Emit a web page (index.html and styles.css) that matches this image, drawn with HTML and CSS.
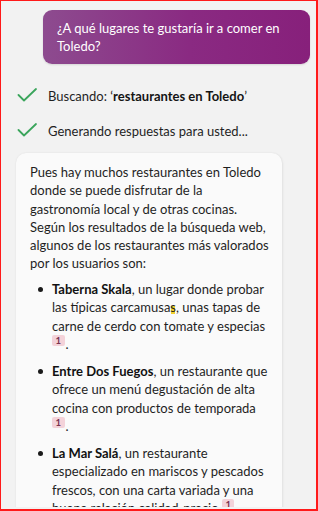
FILE: index.html
```html
<!DOCTYPE html>
<html lang="es">
<head>
<meta charset="utf-8">
<link rel="stylesheet" href="styles.css">
</head>
<body>
<div class="frame">
  <div class="chat">
    <div class="bubble">¿A qué lugares te gustaría ir a comer en Toledo?</div>

    <div class="status status-first">
      <svg class="check" width="20" height="14" viewBox="0 0 20 14"><path d="M1.5 7 L7 12.5 L19 1" fill="none" stroke="#3ba55c" stroke-width="1.8" stroke-linecap="round" stroke-linejoin="round"/></svg>
      <span>Buscando: ‘<b>restaurantes en Toledo</b>’</span>
    </div>
    <div class="status">
      <svg class="check" width="20" height="14" viewBox="0 0 20 14"><path d="M1.5 7 L7 12.5 L19 1" fill="none" stroke="#3ba55c" stroke-width="1.8" stroke-linecap="round" stroke-linejoin="round"/></svg>
      <span>Generando respuestas para usted...</span>
    </div>

    <div class="card">
      <p class="intro">Pues hay muchos restaurantes en Toledo donde se puede disfrutar de la gastronomía local y de otras cocinas. Según los resultados de la búsqueda web, algunos de los restaurantes más valorados por los usuarios son:</p>
      <ul class="list">
        <li class="item"><span class="dot"></span><span class="item-text"><b>Taberna Skala</b>, un lugar donde probar las típicas carcamusa<span class="mark">s</span>, unas tapas de carne de cerdo con tomate y especias <sup class="cite">1</sup>.</span></li>
        <li class="item"><span class="dot"></span><span class="item-text"><b>Entre Dos Fuegos</b>, un restaurante que ofrece un menú degustación de alta cocina con productos de temporada <sup class="cite">1</sup>.</span></li>
        <li class="item"><span class="dot"></span><span class="item-text"><b>La Mar Salá</b>, un restaurante especializado en mariscos y pescados frescos, con una carta variada y una buena relación calidad-precio <sup class="cite">1</sup>.</span></li>
      </ul>
    </div>
  </div>
</div>
</body>
</html>
```
FILE: styles.css
```css
html, body {
  margin: 0;
  padding: 0;
}

body {
  font-family: "Lato", "Noto Sans", sans-serif;
  font-size: 13px;
  color: #1f1f1f;
}

.frame {
  width: 318px;
  height: 511px;
  box-sizing: border-box;
  border: 1px solid #ff1a1a;
  border-right-width: 2px;
  border-bottom-width: 2px;
  background: #f2f2f2;
  padding-bottom: 2px;
  display: flex;
  flex-direction: column;
}

.chat {
  flex: 1;
  overflow: hidden;
  padding: 9px 6px 0 14px;
  display: flex;
  flex-direction: column;
}

.bubble {
  align-self: flex-end;
  width: 267px;
  box-sizing: border-box;
  padding: 9px 14px;
  line-height: 18px;
  color: #fff;
  border-radius: 9px;
  background: linear-gradient(90deg, #8d4b8f 0%, #8a2a82 55%, #87207b 100%);
  box-shadow: 0 1px 2px rgba(0, 0, 0, 0.12);
}

.status {
  display: flex;
  align-items: center;
  gap: 11px;
  margin-top: 17px;
  line-height: 18px;
  margin-left: 2px;
}

.status-first {
  margin-top: 23px;
}

.status b {
  font-weight: 700;
  color: #141414;
}

.check {
  flex: none;
  display: block;
  margin-top: -3px;
}

.card {
  flex: none;
  width: 266px;
  box-sizing: border-box;
  margin-top: 13px;
  margin-left: 1px;
  padding: 10px 13px 20px 14px;
  background: #fafafa;
  border-radius: 10px;
  box-shadow: 0 0 2px rgba(0, 0, 0, 0.08), 1px 1px 3px rgba(0, 0, 0, 0.05);
  line-height: 18.3px;
}

.intro {
  margin: 0;
}

.list {
  list-style: none;
  margin: 7px 0 0 0;
  padding: 0;
}

.item {
  display: grid;
  grid-template-columns: 22px 1fr;
  line-height: 18.5px;
  margin-bottom: 8px;
}

.dot {
  width: 5px;
  height: 5px;
  border-radius: 50%;
  background: #1a1a1a;
  margin: 7px 0 0 8px;
}

.item b {
  font-weight: 700;
  color: #111;
}

.cite {
  display: inline-block;
  vertical-align: 5px;
  font-size: 9.5px;
  font-weight: 700;
  line-height: 11px;
  height: 11px;
  padding: 0 3.5px;
  margin-right: 1px;
  border-radius: 2px;
  background: #f3d2d9;
  color: #7a3350;
}

.mark {
  background: linear-gradient(to right, transparent 25%, #f2d22e 25%, #f2d22e 80%, transparent 80%) no-repeat 0 85% / 100% 50%;
}
```
